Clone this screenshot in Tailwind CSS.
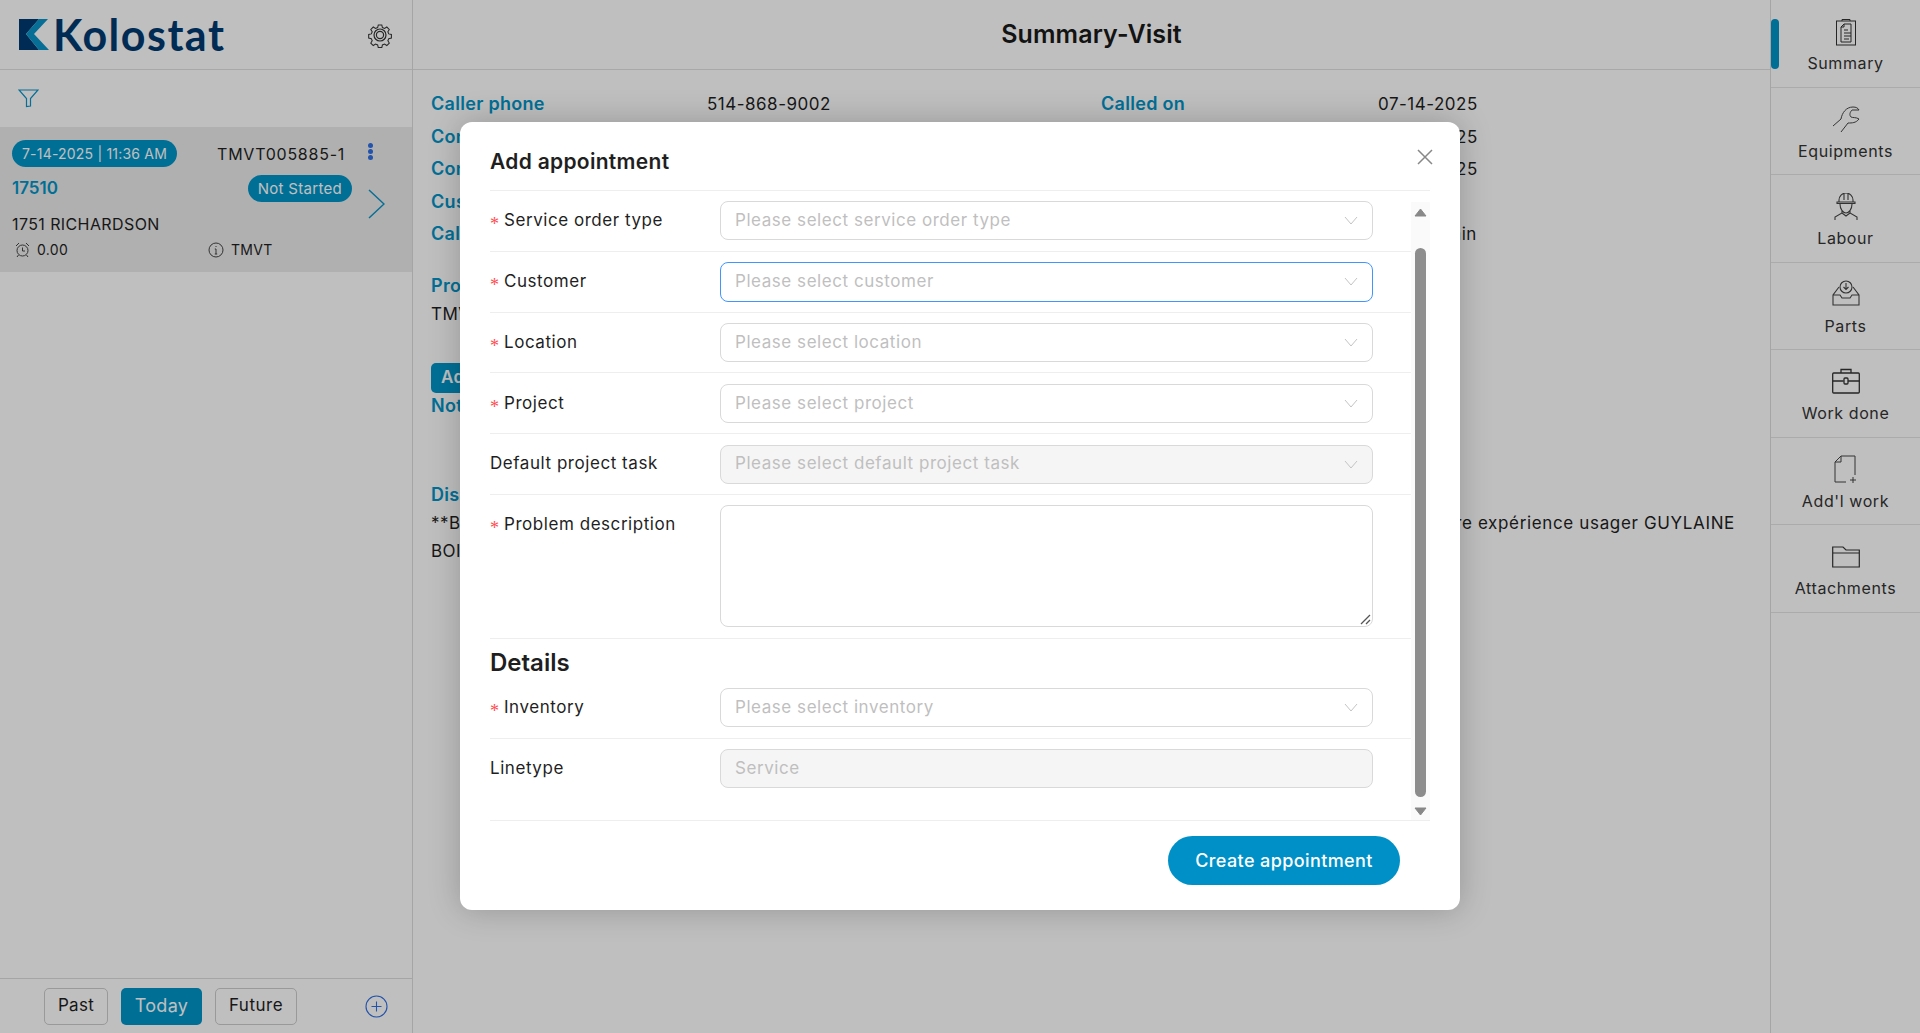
<!DOCTYPE html>
<html lang="en">
<head>
  <meta charset="UTF-8">
  <title>Summary-Visit</title>
  <script src="https://cdn.jsdelivr.net/npm/@tailwindcss/browser@4"></script>
</head>
<body class="font-['Inter','Noto_Sans',sans-serif] text-[#1f1f1f] bg-white overflow-hidden">
  <div class="relative flex h-[1033px] w-[1920px] overflow-hidden">

    <!-- left list -->
    <aside class="flex w-[413px] shrink-0 flex-col border-r border-[#ddd]">
      <div class="flex h-[70px] shrink-0 items-center justify-between border-b border-[#e0e0e0] pl-[19px] pr-[19px]">
        <div class="flex items-center gap-[4px]">
          <svg width="30" height="31" viewBox="0 0 30 31"><path d="M0 0H20L7 15L20 31H0Z" fill="#003a70"/><path d="M29 0H20L7 15L20 31H30L15 15Z" fill="#0a94c8"/></svg>
          <span class="font-['Lato',sans-serif] text-[43px] leading-none font-bold tracking-[1.5px] text-[#003a70]">Kolostat</span>
        </div>
        <svg width="26" height="26" viewBox="0 0 26 26" fill="none" stroke="#333" stroke-width="1.2"><path d="M11 1.5h4l.7 3 2.4 1 2.6-1.6 2.8 2.8-1.6 2.6 1 2.4 3 .7v4l-3 .7-1 2.4 1.6 2.6-2.8 2.8-2.6-1.6-2.4 1-.7 3h-4l-.7-3-2.4-1-2.6 1.6-2.8-2.8 1.6-2.6-1-2.4-3-.7v-4l3-.7 1-2.4-1.6-2.6 2.8-2.8 2.6 1.6 2.4-1z" transform="translate(1.6 1.6) scale(.88)"/><circle cx="13" cy="13" r="6"/><circle cx="13" cy="13" r="3.6"/></svg>
      </div>
      <div class="flex h-[57px] shrink-0 items-center pl-[18px]">
        <svg width="21" height="19" viewBox="0 0 21 19" fill="none" stroke="#0a94c8" stroke-width="1.2"><path d="M1 1H20L12.5 9.5V17L8.5 17.5V9.5Z"/></svg>
      </div>
      <div class="relative h-[145px] shrink-0 bg-[#ebebeb] pl-3 pr-[60px] pt-[13px]">
        <div class="flex items-center justify-between">
          <span class="rounded-full bg-[#0094c8] px-[10px] py-[3px] text-[14px] leading-[21px] tracking-[.2px] text-white">7-14-2025 | 11:36 AM</span>
          <span class="mr-[7px] text-[16px] tracking-[.75px]">TMVT005885-1</span>
        </div>
        <div class="mt-[8px] flex items-center justify-between">
          <span class="text-[17px] font-semibold text-[#0094c8]">17510</span>
          <span class="rounded-full bg-[#0094c8] px-[10px] py-[3px] text-[15px] leading-[21px] tracking-[.3px] text-white">Not Started</span>
        </div>
        <div class="mt-[10px] text-[16px] leading-6 tracking-[.4px]">1751 RICHARDSON</div>
        <div class="mt-[2px] flex items-center text-[14px] leading-6 tracking-[.3px]">
          <svg class="ml-[3px]" width="15" height="16" viewBox="0 0 15 16" fill="none" stroke="#444" stroke-width="1"><circle cx="7.5" cy="8.5" r="5.5"/><path d="M1 4l3-3M14 4l-3-3M7.5 5.5V9H10M3.5 13L2 15M11.5 13L13 15"/></svg>
          <span class="ml-[7px] w-[171px]">0.00</span>
          <svg width="16" height="16" viewBox="0 0 16 16" fill="none" stroke="#444" stroke-width="1"><circle cx="8" cy="8" r="7"/><path d="M8 4v1M6.8 7h1.2v5M6.8 12h2.4"/></svg>
          <span class="ml-[7px]">TMVT</span>
        </div>
        <div class="absolute right-[39px] top-[16px] flex flex-col gap-[1px]">
          <span class="size-[5px] rounded-full bg-[#2f6fe4]"></span><span class="size-[5px] rounded-full bg-[#2f6fe4]"></span><span class="size-[5px] rounded-full bg-[#2f6fe4]"></span>
        </div>
        <svg class="absolute right-[27px] top-[62px]" width="17" height="30" viewBox="0 0 17 30" fill="none" stroke="#0a94c8" stroke-width="1.5"><path d="M1 1L16 15L1 29"/></svg>
      </div>
      <div class="flex-1"></div>
      <div class="flex h-[55px] shrink-0 items-center border-t border-[#ddd] pl-[44px]">
        <button class="h-[37px] w-[64px] rounded-[5px] border border-[#ccc] text-[17px] tracking-[.3px]">Past</button>
        <button class="ml-[13px] h-[37px] w-[81px] rounded-[5px] bg-[#0094c8] pb-[1px] text-[18px] tracking-[.3px] text-white">Today</button>
        <button class="ml-[13px] h-[37px] w-[82px] rounded-[5px] border border-[#ccc] text-[17px] tracking-[.5px]">Future</button>
        <svg class="ml-[68px]" width="23" height="23" viewBox="0 0 23 23" fill="none" stroke="#2f6fe4" stroke-width="1.1"><circle cx="11.5" cy="11.5" r="10.5"/><path d="M11.5 6.5v10M6.5 11.5h10"/></svg>
      </div>
    </aside>

    <!-- summary -->
    <main class="min-w-0 flex-1 border-r border-[#ddd]">
      <div class="flex h-[70px] items-center justify-center border-b border-[#e0e0e0] text-[25px] font-semibold tracking-[.1px] text-[#1a1a1a]">Summary-Visit</div>
      <div class="pl-[18px] pr-[28px] pt-[18px] text-[17px] tracking-[.5px]">
        <div class="grid grid-cols-[276px_394px_277px_1fr] leading-[32.5px]">
          <span class="text-[18px] font-semibold tracking-[.3px] text-[#0094c8]">Caller phone</span><span>514-868-9002</span><span class="text-[18px] font-semibold tracking-[.3px] text-[#0094c8]">Called on</span><span>07-14-2025</span>
          <span class="text-[18px] font-semibold tracking-[.3px] text-[#0094c8]">Contact name</span><span></span><span class="text-[18px] font-semibold tracking-[.3px] text-[#0094c8]">Created on</span><span>07-14-2025</span>
          <span class="text-[18px] font-semibold tracking-[.3px] text-[#0094c8]">Contact phone</span><span></span><span class="text-[18px] font-semibold tracking-[.3px] text-[#0094c8]">Updated on</span><span>07-14-2025</span>
          <span class="text-[18px] font-semibold tracking-[.3px] text-[#0094c8]">Customer</span><span></span><span></span><span></span>
          <span class="text-[18px] font-semibold tracking-[.3px] text-[#0094c8]">Call taker</span><span></span><span class="text-[18px] font-semibold tracking-[.3px] text-[#0094c8]">Created by</span><span>User Admin</span>
        </div>
        <div class="mt-[21px] text-[18px] font-semibold leading-[28px] tracking-[.3px] text-[#0094c8]">Project</div>
        <div class="leading-[28px]">TMVT</div>
        <button class="mt-[35px] block h-[30px] rounded-[5px] bg-[#0094c8] px-[10px] font-semibold text-white">Add note</button>
        <div class="text-[18px] font-semibold leading-[26px] tracking-[.3px] text-[#0094c8]">Notes</div>
        <div class="mt-[62px] text-[18px] font-semibold leading-[28px] tracking-[.3px] text-[#0094c8]">Dispatch notes</div>
        <div class="flex w-[1304px] justify-between leading-[28px]"><span>**BILLABLE** Problème de lecture sur ordinateur, voir avec</span><span class="tracking-[.65px]">la salle, faire expérience usager GUYLAINE</span></div>
        <div class="leading-[28px]">BOIVIN</div>
      </div>
    </main>

    <!-- right tabs -->
    <nav class="relative w-[149px] shrink-0 text-[16px] tracking-[.6px] text-[#333]">
      <span class="absolute left-0 top-[19px] h-[50px] w-2 rounded-full bg-[#0094c8]"></span>
      <a class="flex h-[88px] flex-col items-center border-b border-[#e5e5e5] pt-[18px]">
        <svg width="20" height="28" viewBox="0 0 20 28" fill="none" stroke="#333" stroke-width="1"><rect x=".5" y="3" width="19" height="24"/><path d="M6 3V1.5h8V3M8 6h7v18H5V9zM8 6v3H5M8 12h4M8 15h7M8 18h7M8 21h5"/></svg>
        <span class="mt-[5px] leading-6">Summary</span>
      </a>
      <a class="flex h-[87px] flex-col items-center border-b border-[#e5e5e5] pt-[18px]">
        <svg width="28" height="27" viewBox="0 0 28 27" fill="none" stroke="#444" stroke-width="1"><path d="M1 20L9 13C10 7 14 1 21 1C24 1 26 2 27 4L20 4C18 6 17 9 19 11C21 12 24 11 27 13C24 17 20 17 16 17L9 26"/></svg>
        <span class="mt-[6px] leading-6">Equipments</span>
      </a>
      <a class="flex h-[88px] flex-col items-center border-b border-[#e5e5e5] pt-[18px]">
        <svg width="24" height="28" viewBox="0 0 24 28" fill="none" stroke="#444" stroke-width="1.1"><path d="M5 9V7a7 7 0 0 1 14 0v2M3 9h18v1.5H3zM10 1v6M14 1v6M6 11c0 5 3 9 6 9s6-4 6-9M8 18v2L1 24v3M16 18v2l7 4v3M8 20l4 3 4-3"/></svg>
        <span class="mt-[5px] leading-6">Labour</span>
      </a>
      <a class="flex h-[87px] flex-col items-center border-b border-[#e5e5e5] pt-[17px]">
        <svg width="28" height="26" viewBox="0 0 28 26" fill="none" stroke="#444" stroke-width="1.1"><path d="M7 7L1 15V25H27V15L21 7M1 15H8L10 18H18L20 15H27"/><circle cx="14" cy="7" r="6"/><path d="M14 3V9M11.5 7L14 9.5L16.5 7"/></svg>
        <span class="mt-[8px] leading-6">Parts</span>
      </a>
      <a class="flex h-[88px] flex-col items-center border-b border-[#e5e5e5] pt-[18px]">
        <svg width="28" height="26" viewBox="0 0 28 26" fill="none" stroke="#333" stroke-width="1.3"><rect x=".7" y="5" width="26.6" height="20" rx="1"/><path d="M9 5V1.5h10V5M.7 13h11M16 13h11.3"/><rect x="12" y="10" width="4" height="6" rx="1"/></svg>
        <span class="mt-[7px] leading-6">Work done</span>
      </a>
      <a class="flex h-[87px] flex-col items-center border-b border-[#e5e5e5] pt-[17px]">
        <svg width="24" height="28" viewBox="0 0 24 28" fill="none" stroke="#444" stroke-width="1"><path d="M12 27H1V7L7 1H21V20M1 7H7V1M19 22V28M16 25H22"/></svg>
        <span class="mt-[6px] leading-6">Add'l work</span>
      </a>
      <a class="flex h-[88px] flex-col items-center border-b border-[#e5e5e5] pt-[21px]">
        <svg width="28" height="22" viewBox="0 0 28 22" fill="none" stroke="#333" stroke-width="1.2"><path d="M.7 21V1H11L14 4H27.3V21ZM.7 7H27.3"/></svg>
        <span class="mt-[8px] leading-6">Attachments</span>
      </a>
    </nav>

    <!-- overlay -->
    <div class="absolute inset-0 bg-black/25"></div>

    <!-- modal -->
    <div class="absolute left-[460px] top-[122px] flex h-[788px] w-[1000px] flex-col rounded-[12px] bg-white pl-[30px] pr-[30px] shadow-[0_0_32px_rgba(0,0,0,0.22)]">
      <div class="relative flex h-[69px] shrink-0 items-center border-b border-[#eee] pt-[11px]">
        <h2 class="text-[21px] font-semibold tracking-[.3px] text-[#1f1f1f]">Add appointment</h2>
        <svg class="absolute right-[-3px] top-[27px]" width="16" height="16" viewBox="0 0 16 16" fill="none" stroke="#888" stroke-width="1.5"><path d="M1 1L15 15M15 1L1 15"/></svg>
      </div>
      <div class="flex h-[629px] shrink-0">
        <form class="w-[921px] text-[17px] tracking-[.55px]">
          <div class="grid h-[60.8px] grid-cols-[230px_653px] items-center border-b border-[#eee]">
            <label><span class="inline-block w-[14px] align-[-4px] font-['Liberation_Serif',serif] text-[18px] leading-none text-[#ff4d4f]">*</span>Service order type</label>
            <div class="flex h-[39px] items-center justify-between rounded-[8px] border border-[#d9d9d9] px-[14px] text-[#bfbfbf]">Please select service order type<svg width="14" height="9" viewBox="0 0 14 9" fill="none" stroke="#c4c4c4" stroke-width="1"><path d="M1 1L7 8L13 1"/></svg></div>
          </div>
          <div class="grid h-[60.8px] grid-cols-[230px_653px] items-center border-b border-[#eee]">
            <label><span class="inline-block w-[14px] align-[-4px] font-['Liberation_Serif',serif] text-[18px] leading-none text-[#ff4d4f]">*</span>Customer</label>
            <div class="flex h-[40px] items-center justify-between rounded-[8px] border border-[#4096ff] px-[14px] text-[#bfbfbf]">Please select customer<svg width="14" height="9" viewBox="0 0 14 9" fill="none" stroke="#c4c4c4" stroke-width="1"><path d="M1 1L7 8L13 1"/></svg></div>
          </div>
          <div class="grid h-[60.8px] grid-cols-[230px_653px] items-center border-b border-[#eee]">
            <label><span class="inline-block w-[14px] align-[-4px] font-['Liberation_Serif',serif] text-[18px] leading-none text-[#ff4d4f]">*</span>Location</label>
            <div class="flex h-[39px] items-center justify-between rounded-[8px] border border-[#d9d9d9] px-[14px] text-[#bfbfbf]">Please select location<svg width="14" height="9" viewBox="0 0 14 9" fill="none" stroke="#c4c4c4" stroke-width="1"><path d="M1 1L7 8L13 1"/></svg></div>
          </div>
          <div class="grid h-[60.8px] grid-cols-[230px_653px] items-center border-b border-[#eee]">
            <label><span class="inline-block w-[14px] align-[-4px] font-['Liberation_Serif',serif] text-[18px] leading-none text-[#ff4d4f]">*</span>Project</label>
            <div class="flex h-[39px] items-center justify-between rounded-[8px] border border-[#d9d9d9] px-[14px] text-[#bfbfbf]">Please select project<svg width="14" height="9" viewBox="0 0 14 9" fill="none" stroke="#c4c4c4" stroke-width="1"><path d="M1 1L7 8L13 1"/></svg></div>
          </div>
          <div class="grid h-[60.8px] grid-cols-[230px_653px] items-center border-b border-[#eee]">
            <label>Default project task</label>
            <div class="flex h-[39px] items-center justify-between rounded-[8px] border border-[#d9d9d9] bg-[#f5f5f5] px-[14px] text-[#bfbfbf]">Please select default project task<svg width="14" height="9" viewBox="0 0 14 9" fill="none" stroke="#c4c4c4" stroke-width="1"><path d="M1 1L7 8L13 1"/></svg></div>
          </div>
          <div class="grid h-[144px] grid-cols-[230px_653px] border-b border-[#eee] pt-[10px]">
            <label class="pt-[7px]"><span class="inline-block w-[14px] align-[-4px] font-['Liberation_Serif',serif] text-[18px] leading-none text-[#ff4d4f]">*</span>Problem description</label>
            <div class="relative h-[122px] rounded-[8px] border border-[#d9d9d9]">
              <svg class="absolute bottom-[1px] right-[1px]" width="11" height="11" viewBox="0 0 11 11" stroke="#555" stroke-width="1.3"><path d="M1 10L10 1M6 10L10 6"/></svg>
            </div>
          </div>
          <h3 class="h-[39px] pt-[6px] text-[24px] leading-[36px] font-semibold tracking-normal">Details</h3>
          <div class="grid h-[60.8px] grid-cols-[230px_653px] items-center border-b border-[#eee]">
            <label><span class="inline-block w-[14px] align-[-4px] font-['Liberation_Serif',serif] text-[18px] leading-none text-[#ff4d4f]">*</span>Inventory</label>
            <div class="flex h-[39px] items-center justify-between rounded-[8px] border border-[#d9d9d9] px-[14px] text-[#bfbfbf]">Please select inventory<svg width="14" height="9" viewBox="0 0 14 9" fill="none" stroke="#c4c4c4" stroke-width="1"><path d="M1 1L7 8L13 1"/></svg></div>
          </div>
          <div class="grid h-[59px] grid-cols-[230px_653px] items-center">
            <label>Linetype</label>
            <div class="flex h-[39px] items-center rounded-[8px] border border-[#d9d9d9] bg-[#f5f5f5] px-[14px] text-[#bfbfbf]">Service</div>
          </div>
        </form>
        <!-- scrollbar -->
        <div class="mt-[11px] flex h-[618px] w-[19px] flex-col items-center bg-[#fafafa] pt-[6px]">
          <svg width="13" height="9" viewBox="0 0 13 9" fill="#888" stroke="#888" stroke-linejoin="round"><path d="M6.5 1L12 8H1Z"/></svg>
          <div class="mt-[31px] h-[549px] w-[11px] rounded-full bg-[#8c8c8c]"></div>
          <svg class="mt-[10px]" width="13" height="9" viewBox="0 0 13 9" fill="#888" stroke="#888" stroke-linejoin="round"><path d="M1 1H12L6.5 8Z"/></svg>
        </div>
      </div>
      <div class="flex flex-1 justify-end border-t border-[#eee] pr-[30px] pt-[15px]">
        <button class="h-[49px] w-[232px] rounded-full bg-[#0090c8] pb-[1px] text-[18px] font-medium tracking-[.4px] text-white">Create appointment</button>
      </div>
    </div>
  </div>
</body>
</html>
